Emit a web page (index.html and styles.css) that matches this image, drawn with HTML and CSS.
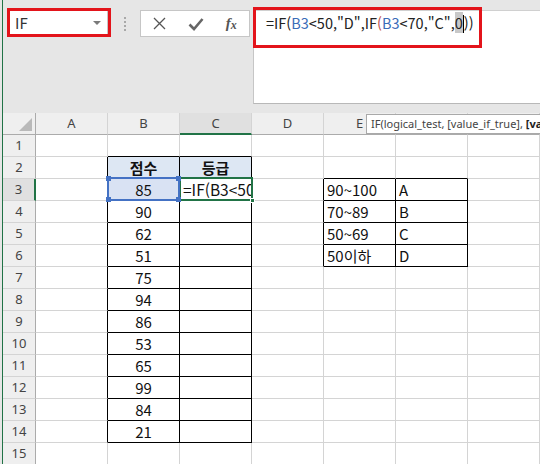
FILE: index.html
```html
<!DOCTYPE html>
<html lang="ko">
<head>
<meta charset="utf-8">
<title>Excel IF</title>
<link rel="stylesheet" href="styles.css">
</head>
<body>
<div class="app">
  <div class="topbar">
    <div class="namebox"><span>IF</span><span class="nb-arrow"></span></div>
    <div class="grip"><i></i><i></i><i></i><i></i></div>
    <div class="fbtns">
      <span class="fbtn"><svg width="13" height="13" viewBox="0 0 13 13"><path d="M1 1L12 12M12 1L1 12" stroke="#555" stroke-width="1.3" fill="none"/></svg></span>
      <span class="fbtn"><svg width="16" height="14" viewBox="0 0 16 14"><path d="M1.5 7.5L6 12L14.5 2" stroke="#666" stroke-width="2.6" fill="none"/></svg></span>
      <span class="fbtn fx"><i>f</i><i class="fx-x">x</i></span>
    </div>
    <div class="formula">
      <div class="ftext">=IF(<span class="ref">B3</span>&lt;50,"D",IF<span class="par">(</span><span class="ref">B3</span>&lt;70,"C",<span class="hl">0</span><span class="caret"></span>))</div>
    </div>
    <div class="mark mark-name"></div>
    <div class="mark mark-formula"></div>
  </div>

  <div class="sheet">
    <div class="row hrow">
      <div class="corner"><span class="tri"></span></div>
      <div class="ch">A</div><div class="ch">B</div><div class="ch ch-sel">C</div><div class="ch">D</div><div class="ch">E</div><div class="ch">F</div><div class="ch">G</div>
    </div>
    <div class="row">
      <div class="rh">1</div>
      <div class="c"></div><div class="c bb"></div><div class="c bb"></div><div class="c"></div><div class="c"></div><div class="c"></div><div class="c"></div>
    </div>
    <div class="row">
      <div class="rh">2</div>
      <div class="c br"></div><div class="c br bb hd ctr">점수</div><div class="c br bb hd ctr">등급</div><div class="c"></div><div class="c bb"></div><div class="c bb"></div><div class="c"></div>
    </div>
    <div class="row">
      <div class="rh rh-sel">3</div>
      <div class="c br"></div>
      <div class="c br bb ctr sel-ref">85<span class="refbox"><i class="q tl"></i><i class="q tr"></i><i class="q bl"></i><i class="q brr"></i></span></div>
      <div class="c br bb active"><span class="clip">=IF(B3&lt;50</span><span class="actbox"><i class="q2"></i></span></div>
      <div class="c br"></div><div class="c br bb">90~100</div><div class="c br bb">A</div><div class="c"></div>
    </div>
    <div class="row">
      <div class="rh">4</div>
      <div class="c br"></div><div class="c br bb ctr">90</div><div class="c br bb"></div><div class="c br"></div><div class="c br bb">70~89</div><div class="c br bb">B</div><div class="c"></div>
    </div>
    <div class="row">
      <div class="rh">5</div>
      <div class="c br"></div><div class="c br bb ctr">62</div><div class="c br bb"></div><div class="c br"></div><div class="c br bb">50~69</div><div class="c br bb">C</div><div class="c"></div>
    </div>
    <div class="row">
      <div class="rh">6</div>
      <div class="c br"></div><div class="c br bb ctr">51</div><div class="c br bb"></div><div class="c br"></div><div class="c br bb">50이하</div><div class="c br bb">D</div><div class="c"></div>
    </div>
    <div class="row">
      <div class="rh">7</div>
      <div class="c br"></div><div class="c br bb ctr">75</div><div class="c br bb"></div><div class="c"></div><div class="c"></div><div class="c"></div><div class="c"></div>
    </div>
    <div class="row">
      <div class="rh">8</div>
      <div class="c br"></div><div class="c br bb ctr">94</div><div class="c br bb"></div><div class="c"></div><div class="c"></div><div class="c"></div><div class="c"></div>
    </div>
    <div class="row">
      <div class="rh">9</div>
      <div class="c br"></div><div class="c br bb ctr">86</div><div class="c br bb"></div><div class="c"></div><div class="c"></div><div class="c"></div><div class="c"></div>
    </div>
    <div class="row">
      <div class="rh">10</div>
      <div class="c br"></div><div class="c br bb ctr">53</div><div class="c br bb"></div><div class="c"></div><div class="c"></div><div class="c"></div><div class="c"></div>
    </div>
    <div class="row">
      <div class="rh">11</div>
      <div class="c br"></div><div class="c br bb ctr">65</div><div class="c br bb"></div><div class="c"></div><div class="c"></div><div class="c"></div><div class="c"></div>
    </div>
    <div class="row">
      <div class="rh">12</div>
      <div class="c br"></div><div class="c br bb ctr">99</div><div class="c br bb"></div><div class="c"></div><div class="c"></div><div class="c"></div><div class="c"></div>
    </div>
    <div class="row">
      <div class="rh">13</div>
      <div class="c br"></div><div class="c br bb ctr">84</div><div class="c br bb"></div><div class="c"></div><div class="c"></div><div class="c"></div><div class="c"></div>
    </div>
    <div class="row">
      <div class="rh">14</div>
      <div class="c br"></div><div class="c br bb ctr">21</div><div class="c br bb"></div><div class="c"></div><div class="c"></div><div class="c"></div><div class="c"></div>
    </div>
    <div class="row">
      <div class="rh">15</div>
      <div class="c"></div><div class="c"></div><div class="c"></div><div class="c"></div><div class="c"></div><div class="c"></div><div class="c"></div>
    </div>
  </div>

  <div class="tooltip">IF(logical_test, [value_if_true], <b>[value_if_false]</b>)</div>
</div>
</body>
</html>
```

FILE: styles.css
```css
* { box-sizing: border-box; }
html, body { margin: 0; padding: 0; }
body {
  width: 540px;
  height: 464px;
  overflow: hidden;
  background: #e6e6e6;
  font-family: "Noto Sans CJK KR", "Noto Sans", sans-serif;
}
.app {
  position: relative;
  margin-left: 2px;
  border-left: 1px solid #217346;
  height: 464px;
  background: #e6e6e6;
}

/* ---------- top bar ---------- */
.topbar {
  display: flex;
  align-items: flex-start;
  height: 113px;
}
.namebox {
  margin: 10px 0 0 6px;
  width: 99px;
  height: 25px;
  background: #fff;
  border: 1px solid #c6c6c6;
  display: flex;
  align-items: center;
  justify-content: space-between;
  padding: 0 6px 0 5px;
  font-size: 15px;
  color: #333;
}
.nb-arrow {
  width: 0;
  height: 0;
  border-left: 4px solid transparent;
  border-right: 4px solid transparent;
  border-top: 4px solid #7a7a7a;
}
.grip {
  margin: 17px 0 0 14px;
  width: 6px;
  display: flex;
  flex-direction: column;
  align-items: center;
  gap: 2px;
}
.grip i {
  width: 2px;
  height: 2px;
  background: #a8a8a8;
}
.fbtns {
  margin: 10px 0 0 12px;
  width: 110px;
  height: 27px;
  background: #fff;
  border: 1px solid #c6c6c6;
  display: flex;
  padding-left: 1px;
}
.fbtn {
  width: 36px;
  display: flex;
  align-items: center;
  justify-content: center;
}
.fx {
  font-family: "Liberation Serif", serif;
  font-style: italic;
  font-weight: 700;
  color: #555;
  font-size: 15px;
}
.fx i { font-style: italic; }
.fx-x { font-size: 12px; margin-top: 3px; }
.formula {
  margin: 10px 0 0 3px;
  flex: 1;
  height: 94px;
  background: #fff;
  border-left: 1px solid #c6c6c6;
  border-top: 1px solid #d0d0d0;
  border-bottom: 1px solid #b8b8b8;
  padding: 1px 0 0 12px;
}
.ftext {
  font-size: 14.5px;
  line-height: 22px;
  color: #222;
  white-space: nowrap;
}
.ref { color: #3a6cb8; }
.par { color: #c0504d; }
.hl { background: #c8c8c8; }
.caret {
  display: inline-block;
  width: 1px;
  height: 18px;
  background: #000;
  vertical-align: -4px;
}
.mark {
  position: absolute;
  border: 3px solid #e3141b;
}
.mark-name { left: 4px; top: 8px; width: 104px; height: 29px; }
.mark-formula { left: 250px; top: 7px; width: 229px; height: 41px; }

/* ---------- sheet ---------- */
.sheet { background: #fff; }
.row { display: flex; height: 22px; }
.hrow { background: #efefef; }
.corner {
  width: 33px;
  height: 22px;
  border-right: 1px solid #ababab;
  border-bottom: 1px solid #ababab;
  display: flex;
  justify-content: flex-end;
  align-items: flex-end;
  padding: 0 3px 3px 0;
}
.tri {
  width: 0;
  height: 0;
  border-left: 13px solid transparent;
  border-bottom: 13px solid #b9b9b9;
}
.ch {
  width: 72px;
  height: 22px;
  border-right: 1px solid #d4d4d4;
  border-bottom: 1px solid #ababab;
  text-align: center;
  font-family: "Noto Sans", sans-serif;
  font-size: 13px;
  line-height: 21px;
  color: #444;
}
.ch-sel {
  background: #e0e0e0;
  border-bottom: 2px solid #217346;
}
.rh {
  width: 33px;
  height: 22px;
  background: #efefef;
  border-right: 1px solid #ababab;
  border-bottom: 1px solid #d4d4d4;
  text-align: center;
  font-family: "Noto Sans", sans-serif;
  font-size: 13px;
  line-height: 21px;
  color: #444;
}
.rh-sel {
  background: #e0e0e0;
  border-right: 2px solid #217346;
}
.c {
  position: relative;
  width: 72px;
  height: 22px;
  border-right: 1px solid #d4d4d4;
  border-bottom: 1px solid #d4d4d4;
  font-size: 15px;
  line-height: 21px;
  color: #111;
  padding: 0 3px;
  white-space: nowrap;
}
.ctr { text-align: center; }
.br { border-right-color: #000; }
.bb { border-bottom-color: #000; }
.hd { background: #dde7f3; font-weight: 700; }
.sel-ref { background: #d9e2f3; z-index: 2; }
.refbox {
  position: absolute;
  left: -1px;
  top: -2px;
  right: -1px;
  bottom: -1px;
  border: 2px solid #4472c4;
}
.q {
  position: absolute;
  width: 5px;
  height: 5px;
  background: #4472c4;
}
.tl { left: -3px; top: -3px; }
.tr { right: -3px; top: -3px; }
.bl { left: -3px; bottom: -3px; }
.brr { right: -3px; bottom: -3px; }
.active { z-index: 1; padding: 0; }
.clip {
  display: block;
  overflow: hidden;
  padding-left: 3px;
  width: 71px;
  font-size: 15.5px;
}
.actbox {
  position: absolute;
  left: -1px;
  top: -2px;
  right: -2px;
  bottom: -1px;
  border: 2px solid #217346;
}
.q2 {
  position: absolute;
  right: -4px;
  bottom: -4px;
  width: 5px;
  height: 5px;
  background: #217346;
  border: 1px solid #fff;
}

/* ---------- tooltip ---------- */
.tooltip {
  position: absolute;
  left: 363px;
  top: 114px;
  width: 190px;
  height: 20px;
  background: #fff;
  border: 1px solid #a9a9a9;
  padding: 0 4px;
  font-family: "Noto Sans", sans-serif;
  font-size: 11px;
  line-height: 18px;
  color: #444;
  white-space: nowrap;
  overflow: hidden;
}
.tooltip b { color: #222; }
```
